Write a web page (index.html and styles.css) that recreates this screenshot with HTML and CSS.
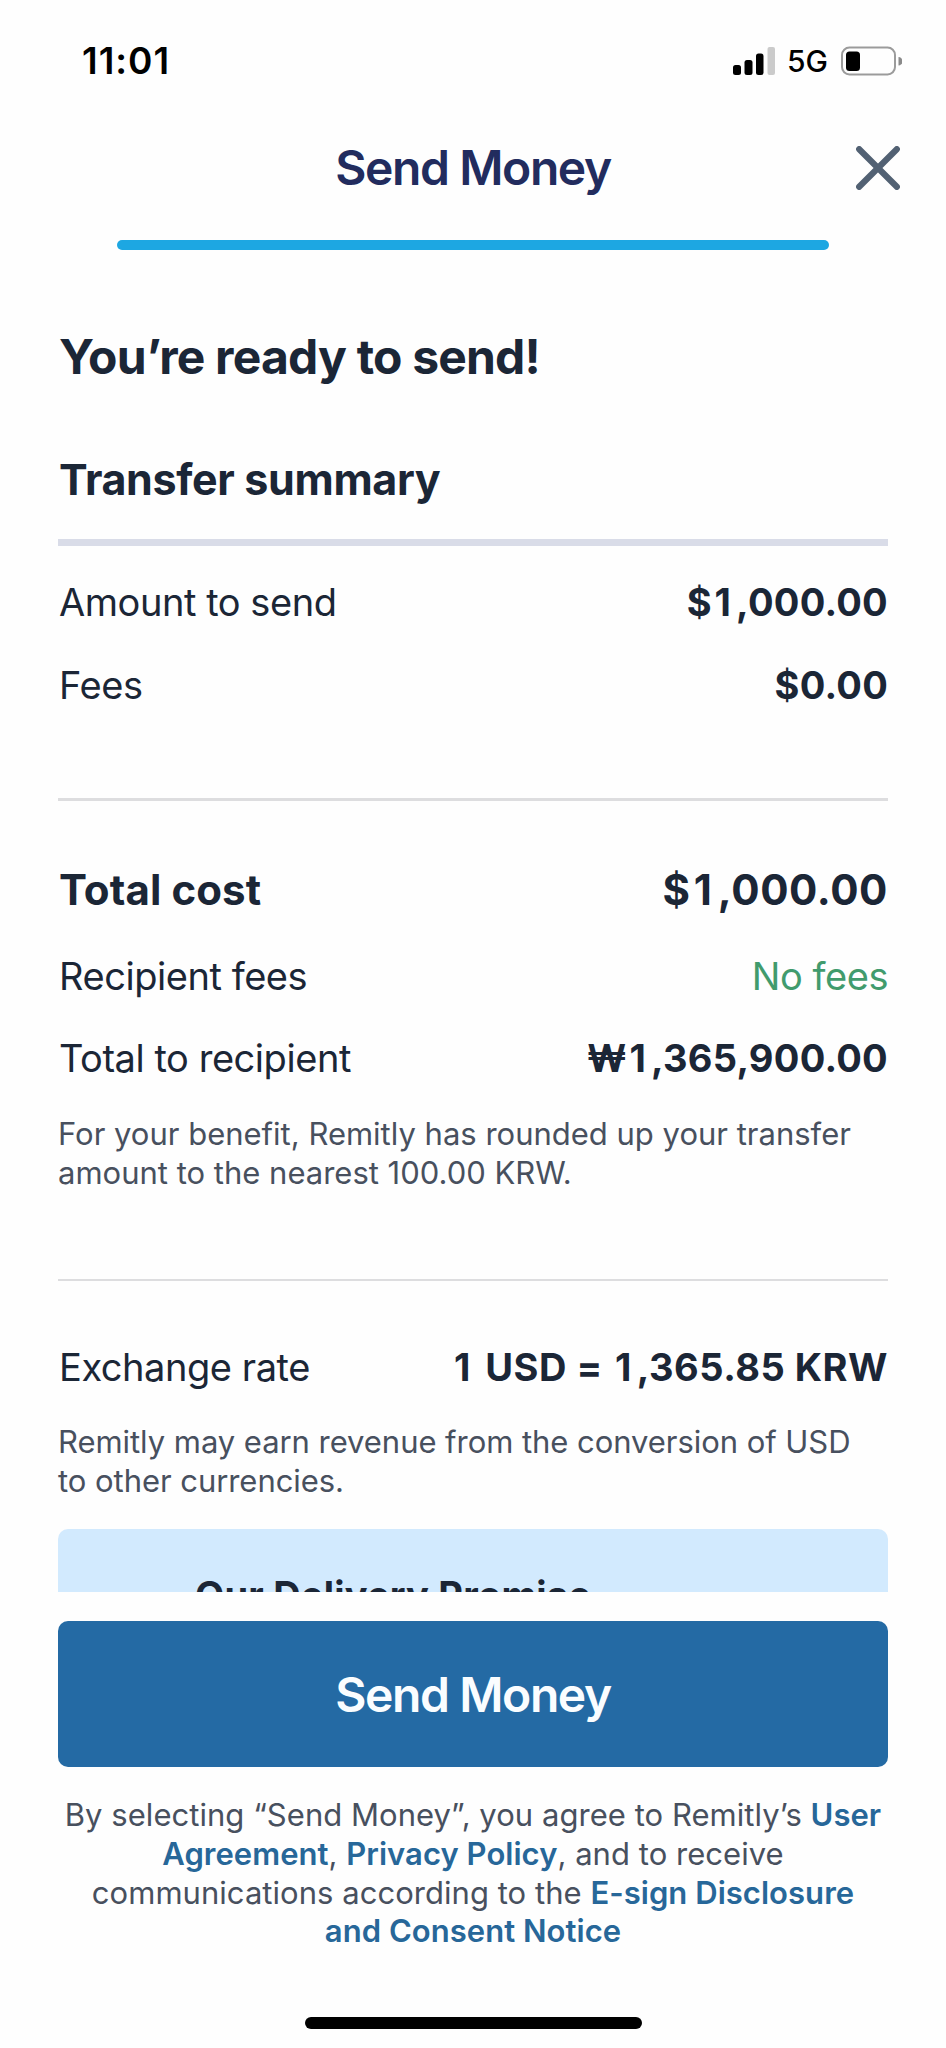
FILE: index.html
```html
<!DOCTYPE html>
<html lang="en">
<head>
    <meta charset="UTF-8">
    <meta name="viewport" content="width=device-width, initial-scale=1.0">
    <title>Send Money</title>
    <link rel="stylesheet" href="styles.css">
</head>
<body>
    <div class="status-bar">
        <span class="time">11:01</span>
        <div class="status-icons">
            <svg class="signal" width="42" height="28" viewBox="0 0 42 28">
                <rect x="0" y="18" width="8" height="10" rx="2.5"/>
                <rect x="11.5" y="13" width="8" height="15" rx="2.5"/>
                <rect x="23" y="6.5" width="7.5" height="21.5" rx="2.5"/>
                <rect x="34.5" y="0" width="7.5" height="28" rx="2" fill="#cbcbcb"/>
            </svg>
            <span class="network">5G</span>
            <svg class="battery" width="61" height="30" viewBox="0 0 61 30">
                <rect x="1" y="1.5" width="53" height="27" rx="7.5" fill="none" stroke="#9b9b9b" stroke-width="2"/>
                <rect x="5" y="5.5" width="14" height="19.5" rx="3.5"/>
                <path d="M57.5 11 a4 4.3 0 0 1 0 8.6 z" fill="#8a8a8a"/>
            </svg>
        </div>
    </div>

    <header class="header">
        <div class="title">Send Money</div>
        <svg class="close" width="44" height="44" viewBox="0 0 44 44">
            <path d="M3.2 3.2 L40.8 40.8 M40.8 3.2 L3.2 40.8" stroke="#526173" stroke-width="6.2" stroke-linecap="round"/>
        </svg>
    </header>
    <div class="progress"></div>

    <main class="content">
        <h1>You’re ready to send!</h1>
        <h2>Transfer summary</h2>

        <section class="amounts">
            <div class="row"><span>Amount to send</span><span class="value">$<span class="one">1</span>,000.00</span></div>
            <div class="row"><span>Fees</span><span class="value">$0.00</span></div>
        </section>

        <section class="totals">
            <div class="row total"><span>Total cost</span><span class="value">$<span class="one">1</span>,000.00</span></div>
            <div class="row"><span>Recipient fees</span><span class="free">No fees</span></div>
            <div class="row"><span>Total to recipient</span><span class="value">₩<span class="one">1</span>,365,900.00</span></div>
            <p class="note benefit">For your benefit, Remitly has rounded up your transfer<br>amount to the nearest 100.00 KRW.</p>
        </section>

        <section class="rate">
            <div class="row"><span>Exchange rate</span><span class="value"><span class="one">1</span> USD = <span class="one">1</span>,365.85 KRW</span></div>
            <p class="note revenue">Remitly may earn revenue from the conversion of USD<br>to other currencies.</p>
        </section>

        <div class="promise"><span>Our Delivery Promise</span></div>
    </main>

    <footer class="footer">
        <button type="button">Send Money</button>
        <p class="terms">
            By selecting “Send Money”, you agree to Remitly’s <a>User</a><br>
            <a>Agreement</a>, <a>Privacy Policy</a>, and to receive<br>
            communications according to the <a>E-sign Disclosure</a><br>
            <a>and Consent Notice</a>
        </p>
        <div class="home-bar"></div>
    </footer>
</body>
</html>
```
FILE: styles.css
```css
* {
    box-sizing: border-box;
}
body {
    font-family: Inter, "Liberation Sans", sans-serif;
    background-color: #fefefe;
    color: #1b2636;
    width: 946px;
    height: 2048px;
    margin: 0;
    overflow: hidden;
    white-space: nowrap;
}
h1, h2, p {
    margin: 0;
}

/* status bar */
.status-bar {
    display: flex;
    justify-content: space-between;
    align-items: center;
    height: 121px;
    padding: 0 44px 0 82px;
    color: #000;
}
.time {
    font-size: 37px;
    font-weight: 600;
    letter-spacing: 1px;
}
.status-icons {
    display: flex;
    align-items: center;
}
.network {
    width: 66px;
    padding-left: 12px;
    font-size: 30px;
    font-weight: 500;
    line-height: 30px;
    padding-top: 1px;
}

/* header */
.header {
    display: grid;
    grid-template-columns: 1fr auto 1fr;
    align-items: center;
    height: 94px;
    padding: 0 46px;
}
.title {
    grid-column: 2;
    font-size: 48px;
    font-weight: 600;
    line-height: 60px;
    letter-spacing: -1.4px;
    color: #222c5e;
}
.close {
    justify-self: end;
}
.progress {
    height: 10px;
    margin: 25px 117px 0;
    border-radius: 5px;
    background-color: #1da7e2;
}

/* summary */
.content {
    height: 1342px;
    padding: 77px 58px 0;
    overflow: hidden;
}
h1, h2 {
    line-height: 60px;
    padding-left: 1px;
}
h1 {
    font-size: 48px;
    letter-spacing: -0.8px;
}
h2 {
    margin-top: 62px;
    font-size: 43px;
    letter-spacing: -0.35px;
}
.row {
    display: flex;
    justify-content: space-between;
    height: 60px;
    padding-left: 1px;
    line-height: 60px;
    font-size: 38px;
    letter-spacing: -0.45px;
}
.value {
    font-weight: 700;
    letter-spacing: 0.25px;
}
/* the digit 1 is narrow, give it the room of the other digits */
.one {
    margin: 0 0.13em 0 0.07em;
}
.free {
    color: #419b6d;
}
.amounts {
    display: flex;
    flex-direction: column;
    gap: 23px;
    height: 259px;
    margin-top: 30px;
    padding-top: 26px;
    border-top: 7px solid #d9dce8;
}
.totals {
    height: 481px;
    padding-top: 59px;
    border-top: 3px solid #dddddf;
}
.totals .row {
    margin-bottom: 22px;
}
.totals .total {
    margin-bottom: 26px;
    font-size: 42px;
    font-weight: 700;
    letter-spacing: 0.1px;
}
.total .value {
    letter-spacing: 0.6px;
}
.note {
    font-size: 31px;
    line-height: 38.8px;
    color: #48505e;
}
.benefit {
    margin-top: 27px;
}
.rate {
    height: 250px;
    padding-top: 56px;
    border-top: 2px solid #dddddf;
}
.rate .value {
    letter-spacing: 0.5px;
}
.revenue {
    margin-top: 26px;
    letter-spacing: -0.05px;
}
.promise {
    height: 180px;
    padding: 36px 137px;
    border-radius: 10px;
    background-color: #d2eafe;
    font-size: 38px;
    font-weight: 700;
    line-height: 60px;
    letter-spacing: 0.2px;
}

/* footer */
.footer {
    padding: 29px 58px 0;
    text-align: center;
}
button {
    display: block;
    width: 100%;
    height: 146px;
    padding: 0;
    border: none;
    border-radius: 10px;
    background-color: #246aa4;
    color: #fafdff;
    font-family: inherit;
    font-size: 48px;
    font-weight: 600;
    letter-spacing: -1.4px;
    cursor: pointer;
}
.terms {
    margin-top: 29px;
    font-size: 31px;
    line-height: 38.8px;
    letter-spacing: 0.04px;
    color: #48505e;
}
.terms a {
    font-weight: 600;
    color: #276799;
}
.home-bar {
    width: 337px;
    height: 12px;
    margin: 66px auto 0;
    border-radius: 6px;
    background-color: #000;
}
```
